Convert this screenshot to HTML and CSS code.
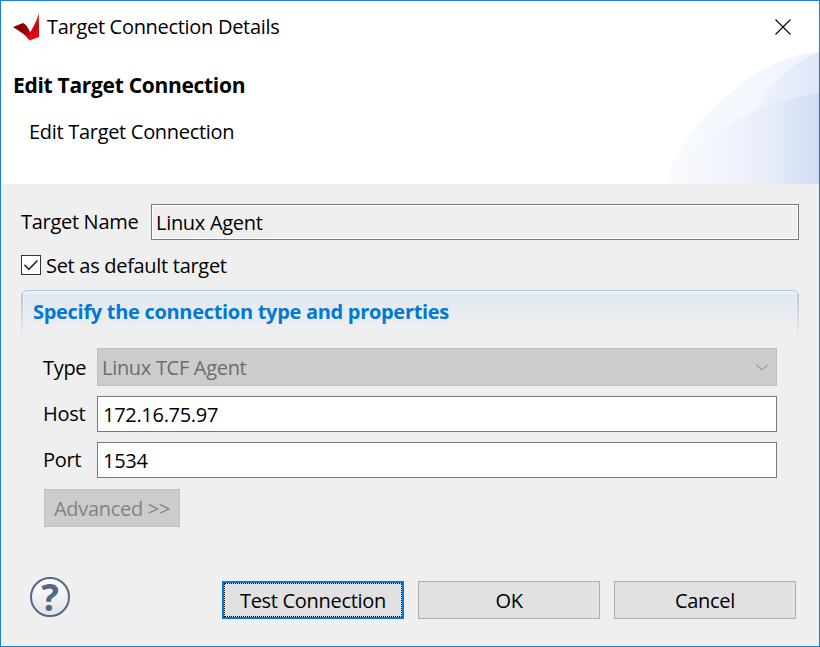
FILE: index.html
```html
<!DOCTYPE html>
<html lang="en">
<head>
<meta charset="utf-8">
<title>Target Connection Details</title>
<link rel="stylesheet" href="styles.css">
</head>
<body>
<main class="dialog">
  <header class="banner">
    <svg class="swoosh" width="151" height="132" viewBox="668 52 151 132" aria-hidden="true">
      <defs>
        <linearGradient id="outer" gradientUnits="userSpaceOnUse" x1="668" y1="0" x2="819" y2="0"><stop offset="0" stop-color="#f7fafd"/><stop offset=".45" stop-color="#f4f8fe"/><stop offset="1" stop-color="#eff4fc"/></linearGradient>
        <linearGradient id="fold" gradientUnits="userSpaceOnUse" x1="750" y1="0" x2="819" y2="0"><stop offset="0" stop-color="#f0f4fd"/><stop offset="1" stop-color="#dfe6f6"/></linearGradient>
        <linearGradient id="inner" gradientUnits="userSpaceOnUse" x1="668" y1="0" x2="819" y2="0"><stop offset="0" stop-color="#f9fbfd"/><stop offset=".4" stop-color="#f1f4fd"/><stop offset=".7" stop-color="#e5ebf8"/><stop offset="1" stop-color="#d1ddf3"/></linearGradient>
      </defs>
      <path fill="url(#outer)" d="M668.500 184C669 174 672 164 677 156C689 133 704 115 723 99C752 74 787 52 819 52V184Z"/>
      <path fill="url(#fold)" d="M819 53C793 60 770 84 750 117V184H819Z"/>
      <path fill="url(#inner)" d="M668.500 184C669 175 674 166 682 160C719 128 762 99 819 94V184Z"/>
    </svg>
    <div class="titlebar">
      <svg class="logo" width="26" height="28" viewBox="0 0 26 28" aria-hidden="true">
        <defs>
          <linearGradient id="dark" x1="0" y1="0" x2="1" y2="1"><stop offset="0" stop-color="#8c0000"/><stop offset=".4" stop-color="#850006"/><stop offset="1" stop-color="#e00008"/></linearGradient>
          <linearGradient id="bright" x1="0" y1="0" x2="0" y2="1"><stop offset="0" stop-color="#e84040"/><stop offset=".5" stop-color="#c4060c"/><stop offset="1" stop-color="#f00c10"/></linearGradient>
        </defs>
        <path fill="url(#dark)" d="M0 14 10 10Q14 12 17 19L20 25 16 27Q14 23 9 20Z"/>
        <path fill="url(#bright)" d="M26 0V24L16.500 27.500 15 22Q21 15 26 0Z"/>
      </svg>
      <span class="text window-name">Target Connection Details</span>
      <svg class="close" width="16" height="16" viewBox="0 0 16 16" aria-label="Close"><path d="M.5.5l15 15M15.500.5l-15 15" fill="none" stroke="#000" stroke-width="1.100"/></svg>
    </div>
    <h1 class="text">Edit Target Connection</h1>
    <p class="text subtitle">Edit Target Connection</p>
  </header>
  <section class="body">
    <div class="name-row">
      <span class="text name-label">Target Name</span>
      <div class="field readonly"><span class="text name-value">Linux Agent</span></div>
    </div>
    <div class="default-row">
      <svg class="check" width="20" height="20" viewBox="0 0 20 20" aria-hidden="true"><rect x=".5" y=".5" width="19" height="19" fill="#fff" stroke="#333"/><path d="M3.500 9.800 7.800 14.300 16.500 5.500" fill="none" stroke="#222" stroke-width="1.500"/></svg>
      <span class="text default-label">Set as default target</span>
    </div>
    <section class="group">
      <svg class="frame" width="778" height="52" viewBox="0 0 778 52" aria-hidden="true">
        <defs>
          <linearGradient id="glow" x1="0" y1="0" x2="0" y2="1"><stop offset="0" stop-color="#e0e8f1"/><stop offset="1" stop-color="#efefef"/></linearGradient>
          <linearGradient id="side" x1="0" y1="0" x2="0" y2="1"><stop offset="0" stop-color="#b0c9e3"/><stop offset="1" stop-color="#efefef"/></linearGradient>
        </defs>
        <path fill="url(#glow)" d="M3 4H775V42H3Z"/>
        <path fill="url(#side)" d="M0 4H2V52H0ZM776 4H778V52H776Z"/>
        <path fill="none" stroke="#b0c9e3" d="M.5 4.500 4.500.5H773.500L777.500 4.500"/>
      </svg>
      <h2 class="text">Specify the connection type and properties</h2>
      <div class="form">
        <span class="text type-label">Type</span>
        <div class="field combo"><span class="text type-value">Linux TCF Agent</span><svg width="12" height="7" viewBox="0 0 12 7" aria-hidden="true"><path d="M.5.7 6 6 11.500.7" fill="none" stroke="#a0a0a0" stroke-width="1.200"/></svg></div>
        <span class="text host-label">Host</span>
        <div class="field input"><span class="text host-value">172.16.75.97</span></div>
        <span class="text port-label">Port</span>
        <div class="field input"><span class="text port-value">1534</span></div>
      </div>
      <div class="button advanced"><span class="text">Advanced &gt;&gt;</span></div>
    </section>
  </section>
  <footer class="footer">
    <div class="help"><span>?</span></div>
    <div class="button primary"><span class="text test">Test Connection</span></div>
    <div class="button"><span class="text ok">OK</span></div>
    <div class="button"><span class="text cancel">Cancel</span></div>
  </footer>
</main>
</body>
</html>
```

FILE: styles.css
```css
* { box-sizing: border-box; }
body { margin: 0; background: #efefef; color: #000; font: 20px/28px "Open Sans", "Noto Sans", sans-serif; }
h1, h2, p { margin: 0; }
svg { display: block; flex: none; }
.text { display: block; white-space: nowrap; letter-spacing: -.3px; }
.dialog { width: 820px; height: 647px; border: 1px solid #1a80d2; display: flex; flex-direction: column; }

.banner { position: relative; height: 183px; background: #fff; padding: 12px 20px 0 12px; flex: none; }
.swoosh { position: absolute; right: 0; bottom: 0; }
.titlebar { display: flex; align-items: flex-start; height: 58px; }
.window-name { margin-left: 8px; }
.close { margin: 6px 8px 0 auto; }
h1 { font-size: 21px; font-weight: 700; line-height: 28px; }
.subtitle { margin: 19px 0 0 16px; }

.body { padding: 20px 20px 0; height: 389px; flex: none; }
.name-row { display: flex; align-items: flex-start; }
.name-label { width: 130px; padding-top: 4px; }
.field { height: 36px; border: 1px solid #7a7a7a; padding: 4px 0 0 5px; background: #fff; }
.readonly { flex: 1; background: #efefef; box-shadow: inset 0 0 0 1px #fff; padding-left: 4px; }
.default-row { display: flex; align-items: center; gap: 5px; height: 28px; margin-top: 12px; }
.check { margin-top: -2px; }
.group { position: relative; height: 238px; margin-top: 10px; padding: 8px 22px 0; }
.frame { position: absolute; left: 0; top: 0; }
h2 { position: relative; font-size: 20px; line-height: 28px; color: #0078d7; margin-left: -10px; }
.form { display: grid; grid-template-columns: 54px 680px; grid-template-rows: 38px 36px 36px; row-gap: 10px; margin-top: 22px; }
.form > .text { padding-top: 4px; }
.form > .type-label { padding-top: 6px; }
.combo { height: 38px; background: #ccc; border-color: #bfbfbf; color: #6d6d6d; display: flex; justify-content: space-between; padding: 5px 8px 0 4px; }
.combo svg { margin-top: 10px; }
.button { width: 182px; height: 38px; border: 1px solid #adadad; background: #e1e1e1; display: flex; justify-content: center; padding-top: 5px; }
.advanced { width: 136px; margin: 11px 0 0 1px; background: #ccc; border-color: #bfbfbf; color: #838383; }

.footer { display: flex; gap: 14px; padding: 8px 0 0 29px; }
.help { width: 40px; height: 40px; margin: -4px 138px 0 0; border: 2px solid #536887; border-radius: 50%; background: linear-gradient(#fff, #e4e4e4); color: #536887; font-size: 37px; font-weight: 700; line-height: 36px; text-align: center; }
.primary { border: 2px solid #0078d7; padding-top: 4px; outline: 1px dotted #000; outline-offset: -3px; }
```
